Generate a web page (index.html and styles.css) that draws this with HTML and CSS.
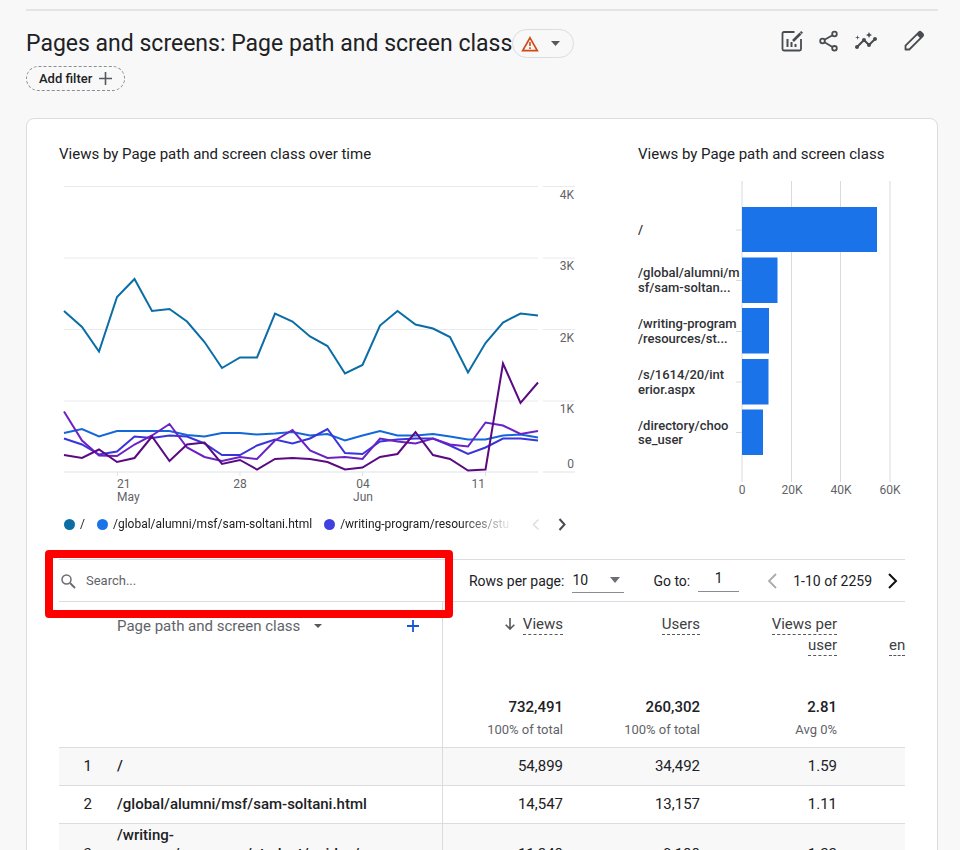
FILE: index.html
```html
<!DOCTYPE html>
<html lang="en">
<head>
<meta charset="utf-8">
<title>Pages and screens</title>
<link rel="stylesheet" href="styles.css">
</head>
<body>
<main class="page">
  <header class="header">
    <div class="heading">
      <h1>Pages and screens: Page path and screen class</h1>
      <button class="status" aria-label="Data quality">
        <svg width="18" height="16" viewBox="0 0 18 16"><path d="M9 1.8 16.3 14.6H1.7Z" fill="none" stroke="#d04a15" stroke-width="1.7"/><path d="M9 6v4M9 11.2v1.7" stroke="#d04a15" stroke-width="1.6"/></svg>
        <svg width="10" height="5" viewBox="0 0 10 5"><path d="M0 0h9L4.500 5Z" fill="#55585c"/></svg>
      </button>
    </div>
    <nav class="actions">
      <button aria-label="Customize report"><svg width="24" height="24" viewBox="0 0 24 24" fill="none" stroke="#484b50" stroke-width="1.8"><path d="M14.500 3H4Q2.500 3 2.500 4.500V20Q2.500 21.500 4 21.500H19.500Q21 21.500 21 20V10"/><path d="M7.500 10v8M11.500 13v5M15.500 15v3" stroke-width="2"/><path d="M13 12l7.500-7.500" stroke-width="2.600"/><path d="M20.800 4.200l1.300-1.300" stroke-width="2.600"/></svg></button>
      <button aria-label="Share"><svg width="24" height="24" viewBox="0 0 24 24" fill="none" stroke="#484b50" stroke-width="1.800"><circle cx="5.500" cy="12" r="2.300"/><circle cx="17.500" cy="5" r="2.300"/><circle cx="17.500" cy="19.300" r="2.300"/><path d="M7.500 10.800l8-4.600M7.500 13.200l8 4.800"/></svg></button>
      <button aria-label="Insights"><svg width="24" height="24" viewBox="0 0 24 24" fill="#484b50"><path d="M21 8c-1.450 0-2.260 1.440-1.930 2.510l-3.550 3.560c-.3-.09-.74-.09-1.040 0l-2.550-2.550C12.270 10.450 11.460 9 10 9c-1.450 0-2.270 1.440-1.930 2.520l-4.560 4.550C2.440 15.740 1 16.550 1 18c0 1.100.9 2 2 2 1.450 0 2.260-1.440 1.930-2.510l4.550-4.560c.3.090.74.090 1.040 0l2.550 2.550C12.730 16.550 13.540 18 15 18c1.450 0 2.270-1.440 1.930-2.520l3.560-3.550c1.070.33 2.510-.48 2.510-1.930 0-1.100-.9-2-2-2z"/><path d="M15 9l.94-2.070L18 6l-2.060-.93L15 3l-.92 2.070L12 6l2.080.93zM3.500 11L4 9l2-.5L4 8l-.5-2L3 8l-2 .5L3 9z"/></svg></button>
      <button class="edit" aria-label="Edit"><svg width="24" height="24" viewBox="0 0 24 24"><path d="M3.500 20.500v-3.800L16.900 3.300q1.100-1 2.200 0l1.600 1.600q1 1.100 0 2.200L7.300 20.500Z" fill="none" stroke="#484b50" stroke-width="1.800" stroke-linejoin="round"/><path d="M14.500 5.500l2.600-2.600h2l2 2v2l-2.600 2.600Z" fill="#484b50"/></svg></button>
    </nav>
  </header>
  <button class="filter">Add filter
    <svg width="13" height="13" viewBox="0 0 13 13"><path d="M6.500 0v13M0 6.500h13" stroke="#55585c" stroke-width="1.600"/></svg>
  </button>

  <section class="card">
    <div class="charts">
      <div class="chart">
        <h2>Views by Page path and screen class over time</h2>
        <svg class="plot" viewBox="59 176 516 332" role="img" aria-label="Views over time">
          <path class="grid-light" d="M64 186.500H538M543 186.500H575M64 258H538M543 258H575M64 329.500H538M543 329.500H575M64 401H538M543 401H575"/>
          <path class="grid-base" d="M64 472H538M543 472H575M117.500 472v4M240 472v4M362.500 472v4M485.500 472v4"/>
          <g class="axis" text-anchor="end">
            <text x="574" y="199">4K</text><text x="574" y="270">3K</text><text x="574" y="342">2K</text><text x="574" y="413">1K</text><text x="574" y="468">0</text>
          </g>
          <g class="axis">
            <text x="117" y="488">21</text><text x="117" y="501">May</text>
            <text x="240" y="488" text-anchor="middle">28</text>
            <text x="363" y="488" text-anchor="middle">04</text><text x="363" y="501" text-anchor="middle">Jun</text>
            <text x="485" y="488" text-anchor="end">11</text>
          </g>
          <g class="lines">
            <polyline stroke="#0b6da6" points="64,311 82,327 99,351.500 117,297 134.500,279 152,311 169.500,309 187,321.500 204.500,342 222,368 240,357.500 257,357.500 275,313.500 292.500,321.500 310,336.500 327.500,346 345,373.500 362.500,365 380,325.500 397.500,311 415.500,324.500 433,328.500 450,337 468,372.500 485.500,343 503,322.500 520.500,313.500 538,315.500"/>
            <polyline stroke="#1467d8" points="64,433 82,429 99,436.500 117,431 134.500,431 152,431 169.500,431 187,435 204.500,436.500 222,433 240,433 257,434.500 275,433.500 292.500,432 310,435.500 327.500,434 345,440.500 362.500,435.500 380,431 397.500,435.500 415.500,435.500 433,434 450,436.500 468,439.500 485.500,439.500 503,435.500 520.500,434.500 538,437.500"/>
            <polyline stroke="#3a35da" points="64,438.500 82,444.500 99,454.500 117,451.500 134.500,436.500 152,438 169.500,435.500 187,436.500 204.500,443.500 222,455 240,455 257,445.500 275,439.500 292.500,443.500 310,438.500 327.500,429 345,453 362.500,454 380,441.500 397.500,439.500 415.500,438.500 433,438.500 450,445.500 468,454 485.500,447.500 503,438.500 520.500,438.500 538,440.500"/>
            <polyline stroke="#6a22c4" points="64,411.500 82,440.500 99,455.500 117,456 134.500,444.500 152,435.500 169.500,424 187,447.500 204.500,457 222,461 240,457 257,459 275,440.500 292.500,430 310,450.500 327.500,458 345,457 362.500,459 380,438.500 397.500,441.500 415.500,443.500 433,438.500 450,444.500 468,446.500 485.500,422.500 503,425.500 520.500,434 538,431"/>
            <polyline stroke="#5a0a82" points="64,455 82,458 99,449.500 117,462 134.500,458 152,436.500 169.500,461 187,444.500 204.500,442.500 222,464 240,460 257,469.500 275,459 292.500,458 310,459 327.500,462 345,469.500 362.500,467.500 380,457 397.500,454 415.500,432 433,455 450,459 468,470.500 485.500,469.500 503,363.500 520.500,403 538,382.500"/>
          </g>
        </svg>
        <div class="legend">
          <ul>
            <li><i class="dot teal"></i>/</li>
            <li><i class="dot blue"></i>/global/alumni/msf/sam-soltani.html</li>
            <li><i class="dot indigo"></i>/writing-program/resources/stu</li>
          </ul>
          <button aria-label="Previous series"><svg width="8" height="13" viewBox="0 0 8 13"><path d="M6.500 1.500l-5 5 5 5" fill="none" stroke="#dcdee0" stroke-width="1.500"/></svg></button>
          <button aria-label="Next series"><svg width="8" height="13" viewBox="0 0 8 13"><path d="M1.500 1l5 5.500-5 5.500" fill="none" stroke="#484b50" stroke-width="2"/></svg></button>
        </div>
      </div>
      <div class="chart">
        <h2>Views by Page path and screen class</h2>
        <svg class="plot" viewBox="638 176 267 332" role="img" aria-label="Views by page">
          <path class="grid-bar" d="M742 181V482M791.500 181V482M840.500 181V482M890 181V482M736 230h6M736 280.500h6M736 331.500h6M736 382h6M736 432.500h6"/>
          <g class="names">
            <text x="638" y="234">/</text>
            <text x="638" y="277">/global/alumni/m</text><text x="638" y="292">sf/sam-soltan...</text>
            <text x="638" y="328">/writing-program</text><text x="638" y="343">/resources/st...</text>
            <text x="638" y="379">/s/1614/20/int</text><text x="638" y="394">erior.aspx</text>
            <text x="638" y="430">/directory/choo</text><text x="638" y="444">se_user</text>
          </g>
          <g fill="#1a73e8">
            <rect x="742" y="207" width="135" height="45"/><rect x="742" y="257.500" width="35.500" height="45.500"/><rect x="742" y="308" width="27" height="45.500"/><rect x="742" y="359" width="26.500" height="45.500"/><rect x="742" y="409.500" width="21" height="45.500"/>
          </g>
          <g class="axis" text-anchor="middle">
            <text x="742" y="494">0</text><text x="792" y="494">20K</text><text x="841" y="494">40K</text><text x="890" y="494">60K</text>
          </g>
        </svg>
      </div>
    </div>

    <div class="toolbar">
      <label class="search">
        <svg width="15" height="17" viewBox="0 -2 15 17" fill="none" stroke="#6b6e72"><circle cx="5.500" cy="5.500" r="4.500" stroke-width="1.500"/><path d="M9 9l5 5" stroke-width="1.900"/></svg>
        <input type="text" placeholder="Search..." aria-label="Search">
        <span class="highlight"></span>
      </label>
      <div class="pager">
        <label for="rows">Rows per page:</label>
        <span class="select"><select id="rows"><option>10</option></select><svg width="10" height="6" viewBox="0 0 10 6"><path d="M0 0h10L5 6Z" fill="#6b6e72"/></svg></span>
        <label class="goto" for="goto">Go to:</label>
        <input id="goto" type="text" value="1">
        <button class="prev" aria-label="Previous page"><svg width="10" height="16" viewBox="0 0 10 16"><path d="M9 1L2 8l7 7" fill="none" stroke="#a9abae" stroke-width="1.800"/></svg></button>
        <span class="range">1-10 of 2259</span>
        <button aria-label="Next page"><svg width="10" height="16" viewBox="0 0 10 16"><path d="M1 1l7 7-7 7" fill="none" stroke="#111" stroke-width="2"/></svg></button>
      </div>
    </div>

    <table>
      <colgroup><col class="c-num"><col class="c-path"><col class="c-val"><col class="c-val"><col class="c-val"><col></colgroup>
      <thead>
        <tr>
          <th></th>
          <th class="path"><div class="dimension"><button>Page path and screen class <svg width="8" height="4" viewBox="0 0 8 4"><path d="M0 0h8L4 4Z" fill="#55585c"/></svg></button><button aria-label="Add dimension"><svg width="12" height="12" viewBox="0 0 12 12"><path d="M6 0v12M0 6h12" stroke="#1558d6" stroke-width="1.800"/></svg></button></div></th>
          <th><svg class="sort" width="10" height="12" viewBox="0 0 10 12"><path d="M5 0v11M.7 6.700L5 11l4.300-4.300" fill="none" stroke="#55585c" stroke-width="1.600"/></svg><span class="metric">Views</span></th>
          <th><span class="metric">Users</span></th>
          <th><span class="metric">Views per</span><br><span class="metric">user</span></th>
          <th class="cut"><br><span class="metric">en</span></th>
        </tr>
      </thead>
      <tbody>
        <tr class="totals">
          <td></td><td class="path"></td>
          <td><b>732,491</b><small>100% of total</small></td>
          <td><b>260,302</b><small>100% of total</small></td>
          <td><b>2.81</b><small>Avg 0%</small></td><td></td>
        </tr>
        <tr class="odd"><td class="num">1</td><td class="path">/</td><td>54,899</td><td>34,492</td><td>1.59</td><td></td></tr>
        <tr><td class="num">2</td><td class="path">/global/alumni/msf/sam-soltani.html</td><td>14,547</td><td>13,157</td><td>1.11</td><td></td></tr>
        <tr class="odd tall"><td class="num">3</td><td class="path">/writing-<br>program/resources/student/guides/<br>index.html</td><td>11,248</td><td>9,188</td><td>1.22</td><td></td></tr>
      </tbody>
    </table>
  </section>
</main>
</body>
</html>
```
FILE: styles.css
```css
* { box-sizing: border-box; }
body {
  margin: 0;
  height: 100vh;
  overflow: hidden;
  background: #f8f8f8;
  color: #202124;
  font: 14px/20px Roboto, sans-serif;
}
button, input, select { font: inherit; color: inherit; }
button { border: 0; padding: 0; background: none; cursor: pointer; }
svg { flex: none; }

.page { margin: 9px 22px 0 26px; border-top: 2px solid #e4e4e4; }
.header { display: flex; justify-content: space-between; padding-top: 18px; }
.heading { display: flex; align-items: center; }
h1 { margin: 0; font-size: 23px; line-height: 28px; font-weight: 400; white-space: nowrap; }
.status {
  display: flex; align-items: center; justify-content: space-between;
  width: 62px; height: 29px; padding: 0 12px 0 8px;
  border: 1px solid #dadce0; border-radius: 15px;
}
.actions { display: flex; gap: 13px; padding-right: 12px; }
.actions button { height: 24px; width: 24px; }
.actions svg { display: block; }
.actions .edit { margin-left: 11px; }
.filter {
  display: flex; align-items: center; gap: 7px;
  height: 25px; margin-top: 8px; padding: 0 12px;
  border: 1px dashed #8a8d91; border-radius: 13px;
  font-size: 13px; font-weight: 500;
}

.card {
  margin-top: 27px; padding: 25px 32px 32px;
  background: #fff; border: 1px solid #dadce0; border-radius: 8px;
}
.charts { display: grid; grid-template-columns: 516fr 267fr; gap: 63px; }
.chart { min-width: 0; }
h2 { margin: 0; font-size: 15px; line-height: 20px; font-weight: 400; white-space: nowrap; }
.plot { display: block; width: 100%; margin-top: 12px; }
.grid-light, .grid-base { stroke: #e8eaed; fill: none; }
.grid-base { stroke: #dfe1e4; }
.grid-bar { stroke: #d9dadc; }
.axis { font-size: 12px; fill: #5f6368; }
.names { font-size: 13px; font-weight: 500; fill: #303236; }
.lines { fill: none; stroke-width: 2; stroke-linejoin: miter; }

.legend { display: flex; align-items: center; gap: 18px; height: 32px; padding-left: 5px; }
.legend ul {
  display: flex; gap: 12px; width: 450px; margin: 0; padding: 0;
  list-style: none; overflow: hidden; white-space: nowrap; font-size: 12px;
  mask-image: linear-gradient(to right, #000 88%, transparent);
}
.legend li { display: flex; align-items: center; gap: 5px; }
.legend button { display: flex; }
.dot { width: 11px; height: 11px; border-radius: 50%; }
.teal { background: #0b6da6; }
.blue { background: #1a73e8; }
.indigo { background: #4040e0; }

.toolbar {
  display: flex; justify-content: space-between; height: 43px; margin-top: 19px;
  border-top: 1px solid #dadce0; border-bottom: 1px solid #dadce0;
}
.search { position: relative; display: flex; align-items: center; gap: 10px; flex: 0 1 384px; padding-left: 2px; }
.search input { flex: 1; min-width: 0; padding: 0; border: 0; outline: 0; background: none; font-size: 13px; }
.search input::placeholder { color: #5f6368; opacity: 1; }
.highlight {
  position: absolute; inset: -10px -10px -17px -14px; z-index: 1;
  border: 8px solid #f00; border-radius: 4px; pointer-events: none;
}
.pager { display: flex; align-items: center; padding-right: 7px; white-space: nowrap; }
.select { display: flex; align-items: center; width: 52px; height: 24px; margin-left: 8px; padding-right: 4px; border-bottom: 1px solid #8a8d91; }
.select select { flex: 1; min-width: 0; appearance: none; padding: 0; border: 0; background: none; }
.goto { margin-left: 29px; }
#goto { width: 41px; height: 22px; margin-left: 8px; padding: 0 0 4px; border: 0; border-bottom: 1px solid #8a8d91; background: none; text-align: center; }
.pager button { display: flex; }
.prev { margin: 0 16px 0 28px; }
.range { margin-right: 16px; }

table { width: 100%; table-layout: fixed; border-collapse: collapse; font-size: 15px; }
.c-num { width: 48px; }
.c-path { width: 335px; }
.c-val { width: 137px; }
th, td { padding: 8px 16px 9px; text-align: right; font-weight: 400; border-bottom: 1px solid #dadce0; }
th { height: 84px; padding: 12px 16px 0; vertical-align: top; line-height: 21px; border: 0; color: #3c4043; }
.path { padding-left: 10px; text-align: left; border-right: 1px solid #dadce0; }
td.path { font-weight: 500; }
.num { padding-left: 0; padding-right: 15px; }
th.path { color: #5f6368; padding-right: 23px; }
.dimension { display: flex; justify-content: space-between; align-items: center; line-height: 24px; }
.dimension button { display: flex; align-items: center; gap: 14px; }
.metric { padding-bottom: 1px; border-bottom: 1px dashed #55585c; }
.sort { margin-right: 8px; vertical-align: -1px; }
.cut { padding: 12px 0 0 36px; text-align: left; white-space: nowrap; }
.totals td { height: 61px; padding: 0 16px 6px; vertical-align: bottom; }
.totals b { display: block; font-weight: 500; line-height: 24px; }
.totals small { display: block; font-size: 13px; line-height: 22px; color: #5f6368; }
.odd { background: #f8f8f8; }
.tall td { padding-top: 2px; padding-bottom: 2px; line-height: 19px; }
```
